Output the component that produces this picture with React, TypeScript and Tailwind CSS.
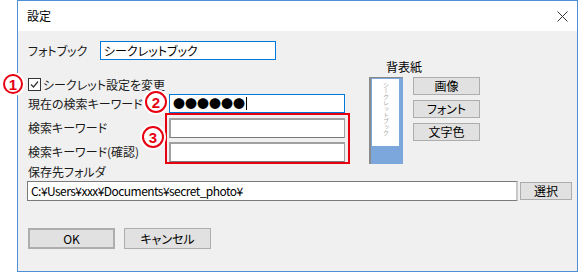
import React from 'react';

const Badge: React.FC<{ n: string; className: string }> = ({ n, className }) => (
  <div
    className={`absolute flex items-center justify-center rounded-full bg-white border-2 border-[#e60012] text-[#e60012] font-bold text-[15px] leading-none font-['Liberation_Sans',sans-serif] ring-2 ring-white ${className}`}
  >
    {n}
  </div>
);

const Btn: React.FC<{ label: string; className?: string }> = ({ label, className = '' }) => (
  <div
    className={`flex items-center justify-center bg-[#e1e1e1] border border-[#adadad] text-[12px] text-black ${className}`}
  >
    {label}
  </div>
);

const App: React.FC = () => {
  return (
    <div className="relative w-[580px] h-[272px] bg-white flex font-['Noto_Sans_CJK_JP',sans-serif] [font-feature-settings:'palt'] text-[12px] text-[#1a1a1a]">
      <div className="ml-[17px] w-[561px] h-[272px] border border-[#4f8fd6] flex flex-col">
        {/* title bar */}
        <div className="h-[30px] bg-white flex items-center justify-between pl-[9px] pr-[8px]">
          <span className="text-[12px] text-black">設定</span>
          <svg width="11" height="11" viewBox="0 0 11 11" className="mr-[1px]">
            <path d="M0.5 0.5 L10.5 10.5 M10.5 0.5 L0.5 10.5" stroke="#333" strokeWidth="1" fill="none" />
          </svg>
        </div>

        {/* body */}
        <div className="flex-1 bg-[#f0f0f0] pl-[10px]">
          <div className="h-[134px] flex">
            {/* left column */}
            <div className="w-[341px] flex flex-col">
              <div className="mt-[10px] h-[19px] flex items-center">
                <span className="w-[72px]">フォトブック</span>
                <div className="w-[176px] h-[19px] bg-white border border-[#0078d7] flex items-center pl-[3px] text-black">
                  シークレットブック
                </div>
              </div>

              <div className="mt-[18px] h-[13px] flex items-center">
                <div className="w-[13px] h-[13px] bg-white border border-[#333] flex items-center justify-center">
                  <svg width="9" height="9" viewBox="0 0 9 9">
                    <path d="M1 4.5 L3.5 7 L8 1.5" stroke="#333" strokeWidth="1.2" fill="none" />
                  </svg>
                </div>
                <span className="ml-[2px]">シークレット設定を変更</span>
              </div>

              <div className="mt-[3px] h-[19px] flex items-center">
                <span className="w-[141px]">現在の検索キーワード</span>
                <div className="w-[176px] h-[19px] bg-white border border-[#0078d7] flex items-center pl-[3px] text-black">
                  <span>●●●●●●</span>
                  <span className="ml-[1px] w-px h-[13px] bg-black" />
                </div>
              </div>

              <div className="mt-[5px] h-[20px] flex items-center">
                <span className="w-[141px]">検索キーワード</span>
                <div className="w-[176px] h-[20px] bg-white border border-[#a0a0a0] border-l-2 border-t-2 border-b-[#7a7a7a]" />
              </div>

              <div className="mt-[4px] h-[20px] flex items-center">
                <span className="w-[141px]">検索キーワード(確認)</span>
                <div className="w-[176px] h-[20px] bg-white border border-[#a0a0a0] border-l-2 border-t-2 border-b-[#7a7a7a]" />
              </div>
            </div>

            {/* right column */}
            <div className="flex flex-col">
              <span className="mt-[28px] ml-[17px] h-4 leading-4 text-black">背表紙</span>
              <div className="mt-[2px] flex">
                <div className="w-[34px] h-[87px] border-l-2 border-t border-[#8a8a8a] bg-[#7ba7dd] pl-[1px] pt-[1px] pr-[4px]">
                  <div className="h-[67px] bg-white flex justify-center pt-[3px]">
                    <span className="[writing-mode:vertical-rl] text-[6px] leading-none text-[#a8a8a8]">シークレットブック</span>
                  </div>
                </div>
                <div className="ml-[10px] flex flex-col gap-[5px]">
                  <Btn label="画像" className="w-[67px] h-[18px]" />
                  <Btn label="フォント" className="w-[67px] h-[18px]" />
                  <Btn label="文字色" className="w-[67px] h-[18px]" />
                </div>
              </div>
            </div>
          </div>

          <div className="h-[14px] leading-[14px]">保存先フォルダ</div>

          <div className="mt-[2px] flex items-start -ml-px">
            <div className="w-[491px] h-[20px] bg-white border border-[#7a7a7a] border-r-2 border-r-[#c8c8c8] flex items-center pl-[3px] text-black tracking-[-0.55px]">
              C:¥Users¥xxx¥Documents¥secret_photo¥
            </div>
            <Btn label="選択" className="ml-[2px] mt-px w-[52px] h-[18px]" />
          </div>

          <div className="mt-[27px] flex">
            <Btn label="OK" className="w-[87px] h-[21px] border-2 border-[#0078d7]" />
            <Btn label="キャンセル" className="ml-[9px] w-[87px] h-[21px]" />
          </div>
        </div>
      </div>

      {/* annotations */}
      <div className="absolute left-[165px] top-[113px] w-[185px] h-[51px] border-2 border-[#e60012]" />
      <Badge n="1" className="left-[3px] top-[74px] w-[20px] h-[20px]" />
      <Badge n="2" className="left-[145px] top-[91px] w-[22px] h-[22px]" />
      <Badge n="3" className="left-[142px] top-[126px] w-[22px] h-[22px]" />
    </div>
  );
};

export default App;
